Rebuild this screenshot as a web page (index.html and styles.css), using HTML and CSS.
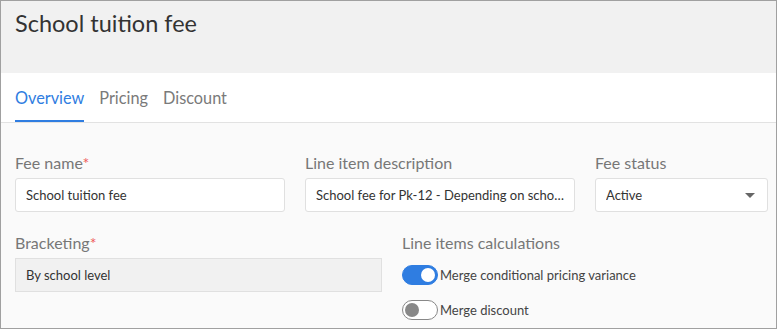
FILE: index.html
```html
<!DOCTYPE html>
<html lang="en">
  <head>
    <meta charset="UTF-8" />
    <meta name="viewport" content="width=device-width, initial-scale=1.0" />
    <title>School tuition fee</title>
    <link rel="stylesheet" href="styles.css">
  </head>

  <body>
    <div class="panel">
      <header class="panel-header">
        <h1>School tuition fee</h1>
      </header>

      <nav class="tabs">
        <a class="tab active" href="#">Overview</a>
        <a class="tab" href="#">Pricing</a>
        <a class="tab" href="#">Discount</a>
      </nav>

      <form class="fee-form">
        <div class="row row-top">
          <div class="field">
            <label for="feeName">Fee name<span class="req">*</span></label>
            <input type="text" id="feeName" value="School tuition fee" />
          </div>
          <div class="field">
            <label for="lineDesc">Line item description</label>
            <input type="text" id="lineDesc" value="School fee for Pk-12 - Depending on school level" />
          </div>
          <div class="field">
            <label for="feeStatus">Fee status</label>
            <select id="feeStatus">
              <option>Active</option>
              <option>Inactive</option>
            </select>
          </div>
        </div>

        <div class="row row-bottom">
          <div class="field">
            <label for="bracketing">Bracketing<span class="req">*</span></label>
            <input type="text" id="bracketing" value="By school level" readonly />
          </div>
          <div class="field">
            <span class="group-label">Line items calculations</span>
            <label class="switch-row">
              <input type="checkbox" class="switch" checked />
              <span>Merge conditional pricing variance</span>
            </label>
            <label class="switch-row">
              <input type="checkbox" class="switch" />
              <span>Merge discount</span>
            </label>
          </div>
        </div>
      </form>
    </div>
  </body>
</html>
```

FILE: styles.css
```css
* {
  box-sizing: border-box;
}

body {
  margin: 0;
  font-family: Lato, "Open Sans", sans-serif;
  background-color: #fff;
}

.panel {
  width: 777px;
  height: 329px;
  border: 1px solid #a0a0a0;
  background-color: #fafafa;
  overflow: hidden;
}

.panel-header {
  background-color: #f1f1f1;
  height: 72px;
  padding: 8px 14px 0;
}

.panel-header h1 {
  margin: 0;
  font-size: 23.5px;
  font-weight: 400;
  color: #333;
}

.tabs {
  background-color: #fff;
  height: 50px;
  border-bottom: 1px solid #e2e2e2;
  padding: 0 14px;
  display: flex;
  gap: 15px;
}

.tab {
  display: flex;
  align-items: center;
  padding-top: 2px;
  font-size: 16.3px;
  color: #7a7a7a;
  text-decoration: none;
  border-bottom: 2px solid transparent;
}

.tab.active {
  color: #2f7de1;
  border-bottom-color: #2f7de1;
}

.fee-form {
  padding: 30px 14px 0;
}

.row {
  display: grid;
  column-gap: 20px;
}

.row-top {
  grid-template-columns: 270px 270px 173px;
}

.row-bottom {
  margin-top: 21px;
  grid-template-columns: 367px 300px;
}

.field label,
.group-label {
  display: block;
  font-size: 16px;
  color: #777;
  margin-bottom: 5px;
  line-height: 20px;
}

.req {
  color: #ee5a5a;
}

.field input[type="text"],
.field select {
  width: 100%;
  height: 34px;
  padding: 0 10px;
  border: 1px solid #e0e0e0;
  border-radius: 3px;
  background-color: #fff;
  font-family: inherit;
  font-size: 13px;
  color: #333;
  outline: none;
  text-overflow: ellipsis;
  appearance: none;
  -webkit-appearance: none;
}

.field input[readonly] {
  background-color: #f1f1f1;
  border-radius: 0;
}

/* flecha del select */
.field select {
  background-image: url("data:image/svg+xml,%3Csvg xmlns='http://www.w3.org/2000/svg' width='10' height='5' viewBox='0 0 10 5'%3E%3Cpath d='M0 0h10L5 5z' fill='%23666'/%3E%3C/svg%3E");
  background-repeat: no-repeat;
  background-position: right 12px center;
}

.group-label {
  margin-bottom: 12px;
}

.field .switch-row {
  display: flex;
  align-items: center;
  gap: 2px;
  font-size: 13px;
  color: #444;
  margin-bottom: 15px;
  line-height: 20px;
}

.switch {
  appearance: none;
  -webkit-appearance: none;
  margin: 0;
  width: 36px;
  height: 20px;
  border-radius: 10px;
  border: 1px solid #888;
  background-color: #fff;
  position: relative;
}

.switch::after {
  content: "";
  position: absolute;
  top: 2px;
  left: 2px;
  width: 14px;
  height: 14px;
  border-radius: 50%;
  background-color: #888;
}

.switch:checked {
  background-color: #2f7de1;
  border-color: #2f7de1;
}

.switch:checked::after {
  left: 18px;
  background-color: #fff;
}
```
